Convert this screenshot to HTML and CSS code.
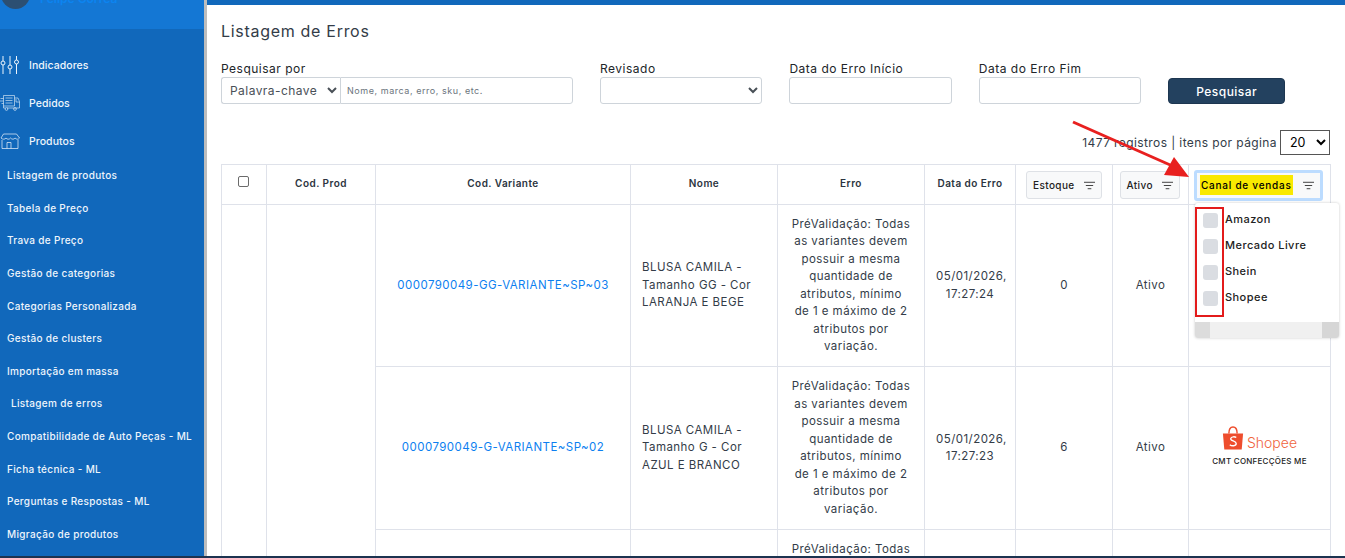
FILE: index.html
```html
<!DOCTYPE html>
<html lang="pt-BR">
<head>
<meta charset="utf-8">
<title>Listagem de Erros</title>
<link rel="stylesheet" href="styles.css">
</head>
<body>
<div class="app">
  <aside class="sidebar">
    <div class="brand">
      <span class="avatar"></span>
      <span class="user">Felipe Corrêa</span>
    </div>
    <nav class="menu">
      <a class="main-item">
        <svg class="ico" viewBox="0 0 20 18" fill="none" stroke="currentColor" stroke-width="1"><path d="M3 0v18M10 0v18M16.500 0v18"/><circle cx="3" cy="7" r="2" fill="#1168bb"/><circle cx="10" cy="11" r="2" fill="#1168bb"/><circle cx="16.500" cy="6" r="2" fill="#1168bb"/></svg>
        <span>Indicadores</span>
      </a>
      <a class="main-item">
        <svg class="ico" viewBox="0 0 20 16" fill="none" stroke="currentColor" stroke-width=".6"><path d="M3.500 .5h11v10.500h-11zM14.500 3h3.500l1.500 3.500v6.500H7M3.500 11v2h2M.5 3.500h3M0 6h3.500M1.500 8.500h2M5.500 3h7M5.500 5.500h7M5.500 8h7M16 4v3h3.500"/><circle cx="6.500" cy="14" r="1.400"/><circle cx="15" cy="14" r="1.400"/></svg>
        <span>Pedidos</span>
      </a>
      <a class="main-item">
        <svg class="ico" viewBox="0 0 20 16" fill="none" stroke="currentColor" stroke-width=".7"><path d="M3.500 1h13l3 4c-1 1.600-3 1.600-4.500 0-1 1.600-3 1.600-4.500 0-1 1.600-3.500 1.600-4.500 0-1 1.600-3.500 1.600-5 0zM2 7v8.500h16V7M7 15.500v-6h4v6"/></svg>
        <span>Produtos</span>
      </a>
      <a class="sub-item">Listagem de produtos</a>
      <a class="sub-item">Tabela de Preço</a>
      <a class="sub-item">Trava de Preço</a>
      <a class="sub-item">Gestão de categorias</a>
      <a class="sub-item">Categorias Personalizada</a>
      <a class="sub-item">Gestão de clusters</a>
      <a class="sub-item">Importação em massa</a>
      <a class="sub-item sub-active">Listagem de erros</a>
      <a class="sub-item">Compatibilidade de Auto Peças - ML</a>
      <a class="sub-item">Ficha técnica - ML</a>
      <a class="sub-item">Perguntas e Respostas - ML</a>
      <a class="sub-item">Migração de produtos</a>
    </nav>
  </aside>
  <main class="content">
    <h1 class="title">Listagem de Erros</h1>
    <form class="filters">
      <div class="field field-search">
        <label>Pesquisar por</label>
        <div class="combo">
          <select class="ctl combo-select"><option>Palavra-chave</option></select>
          <input class="ctl combo-input" placeholder="Nome, marca, erro, sku, etc.">
        </div>
      </div>
      <div class="field"><label>Revisado</label><select class="ctl"><option></option></select></div>
      <div class="field"><label>Data do Erro Início</label><input class="ctl"></div>
      <div class="field"><label>Data do Erro Fim</label><input class="ctl"></div>
      <button type="button" class="search-btn">Pesquisar</button>
    </form>
    <div class="pager">
      <span>1477 registros | itens por página</span>
      <select class="page-size"><option>20</option></select>
    </div>
    <table class="grid">
      <colgroup>
        <col class="c-check"><col class="c-prod"><col class="c-var"><col class="c-name"><col class="c-err"><col class="c-date"><col class="c-stock"><col class="c-active"><col class="c-channel">
      </colgroup>
      <thead>
        <tr>
          <th><span class="checkbox"></span></th>
          <th>Cod. Prod</th>
          <th>Cod. Variante</th>
          <th>Nome</th>
          <th>Erro</th>
          <th>Data do Erro</th>
          <th><span class="filter-btn">Estoque <svg class="fl" viewBox="0 0 12 9"><path d="M0 1h12M2 4.500h8M4 8h4"/></svg></span></th>
          <th><span class="filter-btn">Ativo <svg class="fl" viewBox="0 0 12 9"><path d="M0 1h12M2 4.500h8M4 8h4"/></svg></span></th>
          <th><span class="filter-btn filter-focus"><mark>Canal de vendas</mark> <svg class="fl" viewBox="0 0 12 9"><path d="M0 1h12M2 4.500h8M4 8h4"/></svg></span></th>
        </tr>
      </thead>
      <tbody>
        <tr class="r1">
          <td rowspan="3"></td>
          <td rowspan="3"></td>
          <td><a class="link">0000790049-GG-VARIANTE~SP~03</a></td>
          <td class="left">BLUSA CAMILA - Tamanho GG - Cor LARANJA E BEGE</td>
          <td>PréValidação: Todas as variantes devem possuir a mesma quantidade de atributos, mínimo de&nbsp;1 e máximo de 2 atributos por variação.</td>
          <td>05/01/2026, 17:27:24</td>
          <td>0</td>
          <td>Ativo</td>
          <td></td>
        </tr>
        <tr class="r2">
          <td><a class="link">0000790049-G-VARIANTE~SP~02</a></td>
          <td class="left">BLUSA CAMILA - Tamanho G - Cor AZUL E BRANCO</td>
          <td>PréValidação: Todas as variantes devem possuir a mesma quantidade de atributos, mínimo de&nbsp;1 e máximo de 2 atributos por variação.</td>
          <td>05/01/2026, 17:27:23</td>
          <td>6</td>
          <td>Ativo</td>
          <td>
            <div class="shopee">
              <svg class="bag" viewBox="0 0 24 26"><path fill="#ee4d2d" d="M1 8h22l-1.500 17.500H2.500z"/><path fill="none" stroke="#ee4d2d" stroke-width="1.600" d="M7.500 8C7.500 3.500 9 1 12 1s4.500 2.500 4.500 7"/><path fill="none" stroke="#fff" stroke-width="1.500" d="M15.500 12.500c-1-1-5.500-1.500-6 1.200s6 2.300 6 5.300-5 3-7 1.300"/></svg>
              <span class="shopee-word">Shopee</span>
            </div>
            <div class="seller">CMT CONFECÇÕES ME</div>
          </td>
        </tr>
        <tr class="r3">
          <td></td>
          <td></td>
          <td>PréValidação: Todas</td>
          <td></td>
          <td></td>
          <td></td>
          <td></td>
        </tr>
      </tbody>
    </table>
    <div class="popup">
      <ul class="popup-list">
        <li><span class="pop-check"></span>Amazon</li>
        <li><span class="pop-check"></span>Mercado Livre</li>
        <li><span class="pop-check"></span>Shein</li>
        <li><span class="pop-check"></span>Shopee</li>
      </ul>
      <div class="pop-scroll"></div>
    </div>
    <div class="red-box"></div>
    <svg class="arrow" viewBox="0 0 125 60"><path d="M1 1 L105 47" stroke="#e8201f" stroke-width="3" fill="none"/><path d="M117 56 L92 54 L102 36 Z" fill="#e8201f"/></svg>
  </main>
</div>
<div class="taskbar"></div>
</body>
</html>
```
FILE: styles.css
```css
* { box-sizing: border-box; }
html, body { margin: 0; height: 100%; overflow: hidden; }
body { font-family: Inter, "Open Sans", sans-serif; color: #212529; background: #fff; }

.app { display: flex; height: 556px; overflow: hidden; }
.taskbar { height: 2px; background: #1c3350; }

.sidebar { width: 207px; flex: none; background: #1168bb; color: #eef5fc; overflow: hidden; border-right: 3px solid #bdbdbd; position: relative; }
.brand { height: 29px; margin-right: -3px; background: #1477d4; position: relative; display: flex; }
.avatar { position: absolute; left: 1px; top: -20px; width: 29px; height: 29px; border-radius: 50%; background: #2c4f72; }
.user { position: absolute; left: 40px; top: -9px; color: #0c84f0; font-size: 12px; line-height: 16px; font-weight: 600; }
.menu { display: flex; flex-direction: column; padding-top: 17px; }
.main-item { display: flex; align-items: center; gap: 9px; height: 38px; font-size: 10.500px; font-weight: 500; letter-spacing: .05px; }
.ico { width: 20px; height: 18px; flex: none; }
.sub-item { display: flex; align-items: center; height: 32.600px; padding-left: 7px; font-size: 10px; font-weight: 500; letter-spacing: .32px; white-space: nowrap; }
.main-item + .sub-item { margin-top: -1px; }
.sub-active { padding-left: 11px; }

.content { flex: 1; min-width: 0; padding: 5px 14px 0 14px; border-top: 5px solid #1168bb; position: relative; overflow: hidden; }
.title { margin: 10px 0 0; font-size: 16px; line-height: 22px; font-weight: 400; color: #333c48; letter-spacing: .7px; }

.filters { display: flex; gap: 27px; align-items: flex-end; margin-top: 18px; }
.field { display: flex; flex-direction: column; width: 162.400px; }
.field-search { width: 352px; flex: none; }
.field label { font-size: 12px; line-height: 15px; height: 17px; padding-top: 1px; color: #212529; letter-spacing: .5px; }
.ctl { height: 27px; width: 100%; border: 1px solid #ced4da; border-radius: 3px; background: #fff; font-family: inherit; font-size: 12px; color: #495057; padding: 0 2px 0 8px; }
.combo { display: flex; }
.combo-select { width: 119px; flex: none; border-radius: 3px 0 0 3px; border-right: 0; letter-spacing: .45px; padding-left: 4px; }
.combo-input { flex: 1; min-width: 0; border-radius: 0 3px 3px 0; font-size: 9px; letter-spacing: .55px; padding-left: 6px; }
.combo-input::placeholder { color: #6c757d; }
.search-btn { width: 117px; height: 26px; background: #23415f; color: #fff; border: 1px solid #1d3650; border-radius: 4px; font-family: inherit; font-size: 12px; font-weight: 500; letter-spacing: .45px; }

.pager { display: flex; justify-content: flex-end; align-items: center; gap: 3px; margin-top: 26px; margin-right: 1px; height: 25px; font-size: 12px; color: #333c48; letter-spacing: .4px; }
.page-size { width: 50px; height: 25px; font-family: inherit; font-size: 12.500px; background: #fff; border: 1px solid #555; padding-left: 5px; border-radius: 0; }

.grid { table-layout: fixed; width: 1109px; border-collapse: collapse; margin-top: 9px; font-size: 11.500px; color: #333c48; letter-spacing: .45px; }
.c-check { width: 45px; }
.c-prod { width: 109px; }
.c-var { width: 255px; }
.c-name { width: 147px; }
.c-err { width: 147px; }
.c-date { width: 91px; }
.c-stock { width: 97px; }
.c-active { width: 76px; }
.c-channel { width: 142px; }
.grid th, .grid td { border: 1px solid #dfe2ea; text-align: center; vertical-align: middle; padding: 0 11px; }
.grid th { height: 40px; font-size: 10px; font-weight: 600; color: #2b3440; padding: 0 5px 3px; white-space: nowrap; letter-spacing: .45px; }
.grid td { line-height: 17.500px; }
.grid td.left { text-align: left; }
.r1 td { height: 162px; }
.r2 td { height: 163px; }
.r3 td { height: 60px; vertical-align: top; padding-top: 11px; }
.link { color: #0d7ff0; white-space: nowrap; }
.checkbox { display: block; width: 11px; height: 11px; margin: -3px auto 0; position: relative; left: -1px; border: 1px solid #6b6b6b; border-radius: 2px; background: #fff; }
.filter-btn { display: inline-flex; align-items: center; justify-content: space-between; gap: 6px; height: 28px; padding: 0 6px; border: 1px solid #dee1e6; border-radius: 3px; background: #f8f9fa; font-size: 10px; font-weight: 500; color: #222; letter-spacing: .4px; width: calc(100% - 10px); position: relative; top: 2px; vertical-align: middle; }
th:nth-child(8) .filter-btn { width: 60px; margin-right: 2px; }
.filter-focus { height: 31px; margin-left: -2px; width: 129px; border: 3px solid #bcdcff; padding: 0 6px 0 3px; letter-spacing: .75px; top: 2px; }
.filter-focus mark { background: #f9e900; padding: 4px 1px; line-height: 12px; }
.fl { width: 11px; height: 9px; flex: none; fill: none; stroke: #333; stroke-width: 1; }
.shopee { display: flex; align-items: flex-end; justify-content: center; gap: 3px; height: 24px; margin-top: -3px; }
.bag { width: 22px; height: 24px; }
.shopee-word { color: #f0643c; font-size: 14px; line-height: 18px; font-weight: 300; letter-spacing: 0; margin-bottom: -2px; }
.seller { font-size: 8px; line-height: 12px; font-weight: 500; color: #222; margin-top: 5px; white-space: nowrap; margin-left: -6px; margin-right: -6px; letter-spacing: .25px; }

.popup { position: absolute; left: 988px; top: 198px; width: 144px; height: 135px; background: #fff; border-radius: 3px; box-shadow: 0 0 3px rgba(0,0,0,.22); display: flex; flex-direction: column; justify-content: space-between; overflow: hidden; }
.popup-list { list-style: none; margin: 0; padding: 3px 0 0 8px; font-size: 11px; color: #222; letter-spacing: .45px; }
.popup-list li { display: flex; height: 26px; align-items: center; gap: 7px; font-weight: 500; }
.pop-check { width: 15px; height: 15px; margin-top: 2px; background: #dadde2; border-radius: 3px; flex: none; }
.pop-scroll { height: 16px; background: #f0f0f0; border-left: 15px solid #dcdcdc; border-right: 17px solid #d6d6d6; }
.red-box { position: absolute; left: 988px; top: 202px; width: 29px; height: 110px; border: 2px solid #e31b1b; pointer-events: none; }
.arrow { position: absolute; left: 865px; top: 116px; width: 125px; height: 60px; overflow: visible; }
```
